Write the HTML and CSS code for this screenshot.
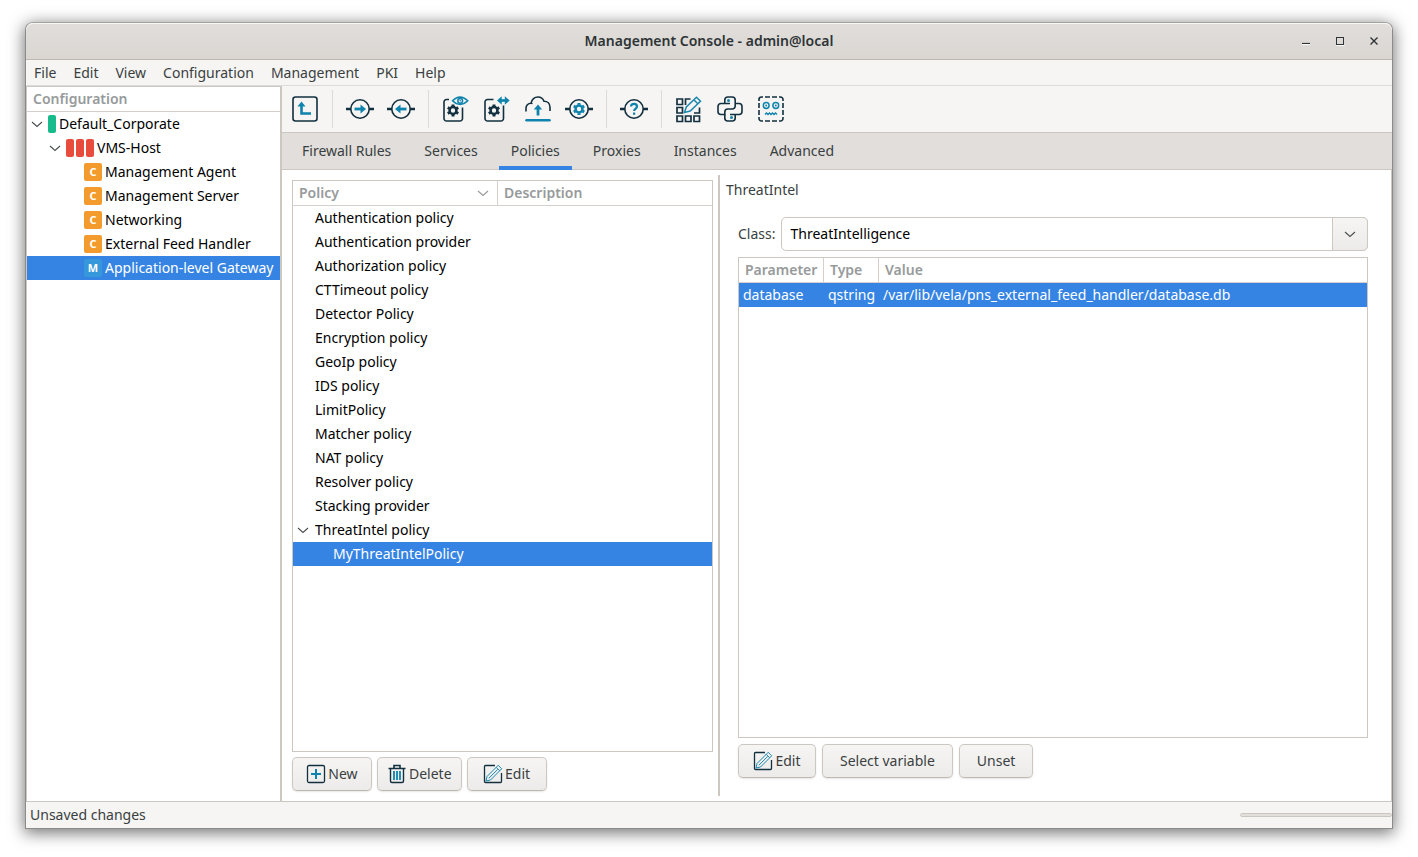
FILE: index.html
```html
<!DOCTYPE html>
<html lang="en">
<head>
  <meta charset="UTF-8">
  <meta name="viewport" content="width=device-width, initial-scale=1.0">
  <title>Management Console - admin@local</title>
  <link rel="stylesheet" href="styles.css">
</head>
<body>
  <!-- Shared icons -->
  <svg class="symbols" aria-hidden="true">
    <symbol id="chevron" viewBox="0 0 12 12"><path d="M1 4l5 4.500 5-4.500" fill="none" stroke="currentColor" stroke-width="1.100"/></symbol>
    <symbol id="pencil" viewBox="0 0 20 20">
      <path d="M12 1.500H2.500a1 1 0 0 0-1 1v15a1 1 0 0 0 1 1h15a1 1 0 0 0 1-1V9" fill="none" stroke="#12303f" stroke-width="1.300"/>
      <path d="M3 17l1-4.500L15.200 1.300l3.500 3.500L7.500 16 3 17zM13.200 3.300l3.500 3.500M5.800 14.300l9-9" fill="none" stroke="#1a86ae"/>
    </symbol>
    <symbol id="gear" viewBox="0 0 14 14">
      <path d="M7 2.500v-2M7 11.500v2M3.100 4.750l-1.700-1M10.900 9.250l1.700 1M3.100 9.250l-1.700 1M10.900 4.750l1.700-1" fill="none" stroke="currentColor" stroke-width="3.200"/>
      <circle cx="7" cy="7" r="3.700" fill="none" stroke="currentColor" stroke-width="2.700"/>
    </symbol>
  </svg>

  <div class="window">
    <header class="titlebar">
      <h1 class="title">Management Console - admin@local</h1>
      <div class="window-controls">
        <button type="button" aria-label="Minimize"><svg viewBox="0 0 10 10"><path d="M1 7.500h8" stroke="#2e3436" stroke-width="1.200"/><path d="M1 8.600h8" stroke="#fff"/></svg></button>
        <button type="button" aria-label="Maximize"><svg viewBox="0 0 10 10"><path d="M1.500 9.600h8" stroke="#fff"/><rect x="1.500" y="1.500" width="7" height="7" fill="none" stroke="#2e3436"/></svg></button>
        <button type="button" aria-label="Close"><svg viewBox="0 0 10 10"><path d="M1.500 1.500l7 7M8.500 1.500l-7 7" stroke="#2e3436" stroke-width="1.400"/></svg></button>
      </div>
    </header>

    <nav class="menubar">
      <button type="button">File</button>
      <button type="button">Edit</button>
      <button type="button">View</button>
      <button type="button">Configuration</button>
      <button type="button">Management</button>
      <button type="button">PKI</button>
      <button type="button">Help</button>
    </nav>

    <div class="workspace">
      <!-- Configuration tree -->
      <aside class="sidebar">
        <h2 class="sidebar-title">Configuration</h2>
        <ul class="tree">
          <li class="tree-row"><svg class="chevron"><use href="#chevron"/></svg><span class="site"></span>Default_Corporate</li>
          <li class="tree-row level-1"><svg class="chevron"><use href="#chevron"/></svg><span class="host"></span><span class="host"></span><span class="host last"></span>VMS-Host</li>
          <li class="tree-row level-2"><span class="badge">C</span>Management Agent</li>
          <li class="tree-row level-2"><span class="badge">C</span>Management Server</li>
          <li class="tree-row level-2"><span class="badge">C</span>Networking</li>
          <li class="tree-row level-2"><span class="badge">C</span>External Feed Handler</li>
          <li class="tree-row level-2 selected"><span class="badge badge-m">M</span>Application-level Gateway</li>
        </ul>
      </aside>

      <main class="main">
        <div class="toolbar">
          <button type="button" aria-label="Up">
            <svg viewBox="0 0 28 28" fill="none"><rect x="2" y="2" width="24" height="24" rx="2.500" stroke="#12303f" stroke-width="1.600"/><path d="M10.500 10v8.500H20" stroke="#0e83ad" stroke-width="2.600"/><path d="M6.500 11.500l4-5 4 5z" fill="#0e83ad"/></svg>
          </button>
          <span class="separator"></span>
          <button type="button" aria-label="Connect">
            <svg viewBox="0 0 28 28" fill="none"><path d="M0 14h5M23 14h5" stroke="#12303f" stroke-width="2.600"/><circle cx="14" cy="14" r="9.200" stroke="#12303f" stroke-width="1.600"/><path d="M8.500 14H16" stroke="#0e83ad" stroke-width="2.800"/><path d="M14.500 9.500l5.500 4.500-5.500 4.500z" fill="#0e83ad"/></svg>
          </button>
          <button type="button" aria-label="Disconnect">
            <svg viewBox="0 0 28 28" fill="none"><path d="M0 14h5M23 14h5" stroke="#12303f" stroke-width="2.600"/><circle cx="14" cy="14" r="9.200" stroke="#12303f" stroke-width="1.600"/><path d="M12 14h7.500" stroke="#0e83ad" stroke-width="2.800"/><path d="M13.500 9.500L8 14l5.500 4.500z" fill="#0e83ad"/></svg>
          </button>
          <span class="separator"></span>
          <button type="button" aria-label="View configuration">
            <svg viewBox="0 0 28 28" fill="none"><path d="M7 4.500H4.500a2.500 2.500 0 0 0-2.500 2.500V23.500A2.500 2.500 0 0 0 4.500 26H18a2.500 2.500 0 0 0 2.500-2.500V12.500" stroke="#12303f" stroke-width="1.600"/><path d="M10.500 5.800Q18 -1.500 25.800 5.800Q18 13 10.500 5.800z" stroke="#0e83ad" stroke-width="1.500"/><circle cx="18.200" cy="5.800" r="2.400" stroke="#0e83ad" stroke-width="1.500"/><circle cx="18.200" cy="5.800" r=".800" fill="#0e83ad"/><use href="#gear" x="4.500" y="9" width="13" height="13" color="#12303f"/></svg>
          </button>
          <button type="button" aria-label="Compare configuration">
            <svg viewBox="0 0 28 28" fill="none"><path d="M10.500 4.500h-6a2.500 2.500 0 0 0-2.500 2.500V23.500A2.500 2.500 0 0 0 4.500 26H18a2.500 2.500 0 0 0 2.500-2.500V10.500" stroke="#12303f" stroke-width="1.600"/><path d="M16 5.500h8" stroke="#0e83ad" stroke-width="2.600"/><path d="M18.700 1.200v8.600L14 5.500zM21.800 1.200v8.600l4.900-4.300z" fill="#0e83ad"/><use href="#gear" x="4.500" y="9" width="13" height="13" color="#12303f"/></svg>
          </button>
          <button type="button" aria-label="Upload configuration">
            <svg viewBox="0 0 28 28" fill="none"><path d="M2 16.500v-3a5 5 0 0 1 5-5.300c.500 0 1 .100 1.500.400M7 8.200C8 4 10.500 2 14 2c3 0 5 1.500 6 4.200 3.500 0 6 2.500 6 6V16" stroke="#12303f" stroke-width="1.600"/><path d="M14 20.500V13" stroke="#0e83ad" stroke-width="2.800"/><path d="M9.800 14.500L14 9.500l4.200 5z" fill="#0e83ad"/><path d="M2.500 25.200h23" stroke="#0e83ad" stroke-width="2.500" stroke-linecap="round"/></svg>
          </button>
          <button type="button" aria-label="Control service">
            <svg viewBox="0 0 28 28" fill="none"><path d="M0 14h5M23 14h5" stroke="#12303f" stroke-width="2.600"/><circle cx="14" cy="14" r="9.200" stroke="#12303f" stroke-width="1.600"/><use href="#gear" x="7.500" y="7.500" width="13" height="13" color="#0e83ad"/></svg>
          </button>
          <span class="separator"></span>
          <button type="button" aria-label="Check">
            <svg viewBox="0 0 28 28" fill="none"><path d="M0 14h5M23 14h5" stroke="#12303f" stroke-width="2.600"/><circle cx="14" cy="14" r="9.200" stroke="#12303f" stroke-width="1.600"/><path d="M11 11.500c0-3.600 6-3.600 6 0 0 2-2.800 2.200-2.800 4.500M14.100 17.500v2.300" stroke="#0e83ad" stroke-width="2.200"/></svg>
          </button>
          <span class="separator"></span>
          <button type="button" aria-label="Edit components">
            <svg viewBox="0 0 28 28" fill="none"><path d="M2 4h5.500v5.500H2zM2 12.500h5.500v5.500H2zM2 21h5.500v5.500H2zM10.500 21h5.500v5.500h-5.500zM19 21h5.500v5.500H19zM15.500 4h-5v6M19 18h5.500v-5.500" stroke="#12303f" stroke-width="1.700"/><path d="M9.500 17.500l1.800-5.500L21.500 2.200l4 4L15.200 16l-5.700 1.500zM18.800 4.800l4 4" stroke="#1a86ae" stroke-width="1.500"/></svg>
          </button>
          <button type="button" aria-label="Python">
            <svg viewBox="0 0 28 28" fill="none" stroke="#12303f" stroke-width="1.600"><path d="M14 8.500H8.800V4.800A3 3 0 0 1 11.800 2h4.400A3 3 0 0 1 19.200 5v6a3 3 0 0 1-3 3h-4.400a3 3 0 0 0-3 3v2.500H5A3 3 0 0 1 2 16.500v-5a3 3 0 0 1 3-3h3.800"/><path d="M14 19.500h5.200V23a3 3 0 0 1-3 3h-4.400a3 3 0 0 1-3-3v-3.500M19.200 8.500H23a3 3 0 0 1 3 3v5a3 3 0 0 1-3 3h-3.800"/><circle cx="12.500" cy="5.500" r="1.500" fill="#0e83ad" stroke="none"/><circle cx="15.500" cy="22.500" r="1.500" fill="#0e83ad" stroke="none"/></svg>
          </button>
          <button type="button" aria-label="Placeholder component">
            <svg viewBox="0 0 28 28" fill="none"><path d="M2 6V4.500A2.500 2.500 0 0 1 4.500 2H6M22 2h1.500A2.500 2.500 0 0 1 26 4.500V6M26 22v1.500a2.500 2.500 0 0 1-2.500 2.500H22M6 26H4.500A2.500 2.500 0 0 1 2 23.500V22M8 2h5M15 2h5M8 26h5M15 26h5M2 8v5M2 15v5M26 8v5M26 15v5" stroke="#12303f" stroke-width="1.600"/><circle cx="9.200" cy="10.500" r="2.900" stroke="#0e83ad" stroke-width="1.500"/><circle cx="18.800" cy="10.500" r="2.900" stroke="#0e83ad" stroke-width="1.500"/><circle cx="9.200" cy="10.500" r="1" fill="#0e83ad"/><circle cx="18.800" cy="10.500" r="1" fill="#0e83ad"/><path d="M8 19.500l1.500-1.500 1.500 1.500 1.500-1.500 1.500 1.500 1.500-1.500 1.500 1.500 1.500-1.500 1.500 1.500" stroke="#0e83ad" stroke-width="1.400"/></svg>
          </button>
        </div>

        <div class="tabs" role="tablist">
          <button type="button" role="tab">Firewall Rules</button>
          <button type="button" role="tab">Services</button>
          <button type="button" role="tab" class="active" aria-selected="true">Policies</button>
          <button type="button" role="tab">Proxies</button>
          <button type="button" role="tab">Instances</button>
          <button type="button" role="tab">Advanced</button>
        </div>

        <div class="panes">
          <section class="policies">
            <div class="list-box">
              <table>
                <thead>
                  <tr><th class="col-policy"><span class="sort-head">Policy<svg class="chevron"><use href="#chevron"/></svg></span></th><th>Description</th></tr>
                </thead>
                <tbody>
                  <tr><td class="indent">Authentication policy</td><td></td></tr>
                  <tr><td class="indent">Authentication provider</td><td></td></tr>
                  <tr><td class="indent">Authorization policy</td><td></td></tr>
                  <tr><td class="indent">CTTimeout policy</td><td></td></tr>
                  <tr><td class="indent">Detector Policy</td><td></td></tr>
                  <tr><td class="indent">Encryption policy</td><td></td></tr>
                  <tr><td class="indent">GeoIp policy</td><td></td></tr>
                  <tr><td class="indent">IDS policy</td><td></td></tr>
                  <tr><td class="indent">LimitPolicy</td><td></td></tr>
                  <tr><td class="indent">Matcher policy</td><td></td></tr>
                  <tr><td class="indent">NAT policy</td><td></td></tr>
                  <tr><td class="indent">Resolver policy</td><td></td></tr>
                  <tr><td class="indent">Stacking provider</td><td></td></tr>
                  <tr><td><span class="expander"><svg class="chevron"><use href="#chevron"/></svg>ThreatIntel policy</span></td><td></td></tr>
                  <tr class="selected"><td class="indent-2">MyThreatIntelPolicy</td><td></td></tr>
                </tbody>
              </table>
            </div>
            <div class="actions actions-tight">
              <button type="button" class="btn">
                <svg viewBox="0 0 20 20" fill="none"><rect x="1.500" y="1.500" width="17" height="17" rx="1.500" stroke="#12303f" stroke-width="1.300"/><path d="M10 5v10M5 10h10" stroke="#0e83ad" stroke-width="2"/></svg>New
              </button>
              <button type="button" class="btn">
                <svg viewBox="0 0 20 20" fill="none"><path d="M1.500 4.500h17M7 4V1.500h6V4" stroke="#12303f" stroke-width="1.600"/><path d="M3.500 5v12a1.500 1.500 0 0 0 1.500 1.500h10a1.500 1.500 0 0 0 1.500-1.500V5" stroke="#12303f" stroke-width="1.400"/><path d="M7 7v9M10 7v9M13 7v9" stroke="#0e83ad" stroke-width="1.800"/></svg>Delete
              </button>
              <button type="button" class="btn"><svg><use href="#pencil"/></svg>Edit</button>
            </div>
          </section>

          <div class="splitter"></div>

          <section class="details">
            <h2 class="details-title">ThreatIntel</h2>
            <div class="details-body">
              <div class="field">
                <label for="class-select">Class:</label>
                <div class="combo">
                  <select id="class-select"><option>ThreatIntelligence</option></select>
                  <span class="combo-arrow"><svg class="chevron"><use href="#chevron"/></svg></span>
                </div>
              </div>
              <div class="list-box">
                <table>
                  <thead>
                    <tr><th class="col-parameter">Parameter</th><th class="col-type">Type</th><th>Value</th></tr>
                  </thead>
                  <tbody>
                    <tr class="selected"><td>database</td><td>qstring</td><td>/var/lib/vela/pns_external_feed_handler/database.db</td></tr>
                  </tbody>
                </table>
              </div>
              <div class="actions">
                <button type="button" class="btn"><svg><use href="#pencil"/></svg>Edit</button>
                <button type="button" class="btn btn-text">Select variable</button>
                <button type="button" class="btn btn-text">Unset</button>
              </div>
            </div>
          </section>
        </div>
      </main>
    </div>

    <footer class="statusbar">
      <span>Unsaved changes</span>
      <progress value="0" max="100" aria-label="Progress"></progress>
    </footer>
  </div>
</body>
</html>
```
FILE: styles.css
```css
* {
  box-sizing: border-box;
}
body {
  margin: 0;
  padding: 22px 25px 28px;
  min-height: 100vh;
  display: flex;
  background: #fff;
  color: #3a3f41;
  font-family: "Noto Sans", sans-serif;
  font-size: 14px;
  line-height: 24px;
}
button,
select {
  font: inherit;
  color: inherit;
}
button {
  margin: 0;
  padding: 0;
  border: 0;
  background: none;
}
h1,
h2 {
  margin: 0;
  font-size: 14px;
}
.symbols {
  position: absolute;
  width: 0;
  height: 0;
}
.chevron {
  width: 12px;
  height: 12px;
  flex: none;
  color: #4a4f51;
}
.window {
  flex: 1;
  min-width: 0;
  display: flex;
  flex-direction: column;
  border: 1px solid #8b8b89;
  border-top-color: #a5a3a0;
  border-radius: 8px 8px 0 0;
  background: #f6f5f3;
  box-shadow: 0 3px 16px 1px rgba(0, 0, 0, 0.55);
}

/* Title bar and menu */
.titlebar {
  display: grid;
  grid-template-columns: 1fr auto 1fr;
  align-items: center;
  height: 37px;
  border-bottom: 1px solid #bfb8b1;
  border-radius: 7px 7px 0 0;
  background: linear-gradient(#e1dedb, #dad6d2);
  box-shadow: inset 0 1px #f7f6f5;
}
.title {
  grid-column: 2;
  color: #2e3436;
  font-weight: 600;
}
.window-controls {
  display: flex;
  justify-content: flex-end;
  padding-right: 1px;
}
.window-controls button {
  width: 34px;
  height: 34px;
  display: flex;
  align-items: center;
  justify-content: center;
}
.window-controls svg {
  width: 10px;
  height: 10px;
}
.menubar {
  display: flex;
  gap: 1px;
  height: 26px;
  border-bottom: 1px solid #dddad7;
}
.menubar button {
  padding: 0 8px;
}
.workspace {
  flex: 1;
  min-height: 0;
  display: flex;
}

/* Configuration tree */
.sidebar {
  width: 256px;
  flex: none;
  border: 1px solid #cdc7c2;
  border-width: 1px 2px 0 1px;
  background: #fff;
  overflow: hidden;
}
.sidebar-title {
  height: 25px;
  padding-left: 6px;
  border-bottom: 1px solid #d5d0cc;
  color: #979a9b;
  font-weight: 600;
}
.tree {
  margin: 0;
  padding: 0;
  list-style: none;
  color: #000;
}
.tree-row {
  display: flex;
  align-items: center;
  height: 24px;
  padding-left: 4px;
  white-space: nowrap;
}
.level-1 {
  padding-left: 22px;
}
.level-2 {
  padding-left: 57px;
}
.site,
.host {
  width: 8px;
  height: 18px;
  border-radius: 2px;
}
.site {
  margin: 0 3px 0 5px;
  background: #18bc8c;
}
.host {
  margin-right: 2px;
  background: #e74c3c;
}
.chevron + .host {
  margin-left: 5px;
}
.host.last {
  margin-right: 3px;
}
.badge {
  width: 18px;
  height: 18px;
  margin-right: 3px;
  flex: none;
  border-radius: 2px;
  background: #f39c2d;
  color: #fff;
  font-size: 11px;
  font-weight: 700;
  line-height: 18px;
  text-align: center;
}
.badge-m {
  background: #3498db;
}
.selected {
  background: #3584e4;
  color: #fff;
}

/* Toolbar and tabs */
.main {
  flex: 1;
  min-width: 0;
  display: flex;
  flex-direction: column;
}
.toolbar {
  display: flex;
  align-items: center;
  gap: 13px;
  height: 47px;
  padding-left: 9px;
  border-bottom: 1px solid #cdc7c2;
}
.toolbar button {
  width: 28px;
  height: 28px;
}
.toolbar svg {
  display: block;
  width: 28px;
  height: 28px;
}
.separator {
  width: 1px;
  height: 38px;
  background: #dddad7;
}
.tabs {
  display: flex;
  gap: 9px;
  height: 37px;
  padding-left: 8px;
  border-bottom: 1px solid #cdc7c2;
  background: #e1dedb;
}
.tabs button {
  height: 37px;
  padding: 2px 12px 0;
  border-bottom: 4px solid transparent;
}
.tabs .active {
  border-bottom-color: #3584e4;
}

/* Panes */
.panes {
  flex: 1;
  display: flex;
  background: #fff;
  border-right: 1px solid #cdc7c2;
}
.policies {
  width: 436px;
  flex: none;
  display: flex;
  flex-direction: column;
  padding: 10px 5px 10px 10px;
}
.splitter {
  width: 2px;
  margin: 5px 0;
  background: #cdc7c2;
}
.details {
  flex: 1;
  min-width: 0;
  display: flex;
  flex-direction: column;
  padding: 8px 23px 23px 6px;
}
.details-title {
  font-weight: 400;
}
.details-body {
  flex: 1;
  display: flex;
  flex-direction: column;
  gap: 6px;
  padding: 15px 0 0 12px;
}
.list-box {
  flex: 1;
  border: 1px solid #cdc7c2;
}
table {
  width: 100%;
  border-collapse: separate;
  border-spacing: 0;
  table-layout: fixed;
  color: #000;
}
th {
  height: 25px;
  padding: 0 6px;
  border-bottom: 1px solid #d5d0cc;
  color: #979a9b;
  font-weight: 600;
  text-align: left;
}
th + th {
  border-left: 1px solid #d5d0cc;
}
td {
  height: 24px;
  padding: 0 4px;
  white-space: nowrap;
}
td + td {
  padding-left: 5px;
}
.selected td {
  color: #fff;
}
.col-policy {
  width: 204px;
}
.col-parameter {
  width: 84px;
}
.col-type {
  width: 55px;
}
.sort-head {
  display: flex;
  align-items: center;
  justify-content: space-between;
  padding-right: 2px;
}
.sort-head .chevron {
  color: #979a9b;
}
.indent {
  padding-left: 22px;
}
.indent-2 {
  padding-left: 40px;
}
.expander {
  display: flex;
  align-items: center;
  gap: 6px;
}
.field {
  display: flex;
  align-items: center;
  gap: 6px;
}
.combo {
  position: relative;
  flex: 1;
}
.combo select {
  display: block;
  width: 100%;
  height: 34px;
  padding: 0 44px 0 8px;
  border: 1px solid #cdc7c2;
  border-radius: 5px;
  appearance: none;
  background: #fff;
  color: #000;
}
/* Drop-down arrow over the right end of the select */
.combo-arrow {
  position: absolute;
  top: 0;
  right: 0;
  display: flex;
  align-items: center;
  justify-content: center;
  width: 36px;
  height: 34px;
  border: 1px solid #cdc7c2;
  border-radius: 0 5px 5px 0;
  background: linear-gradient(#f6f5f4, #edebe9);
  pointer-events: none;
}
.actions {
  display: flex;
  gap: 6px;
}
.actions-tight {
  gap: 5px;
  padding-top: 5px;
}
.btn {
  display: flex;
  align-items: center;
  justify-content: center;
  gap: 2px;
  height: 34px;
  min-width: 78px;
  padding: 0 9px;
  border: 1px solid #cdc7c2;
  border-bottom-color: #bfb8b1;
  border-radius: 5px;
  background: linear-gradient(#f6f5f4, #edebe9);
  box-shadow: 0 1px 2px rgba(0, 0, 0, 0.1);
}
.actions-tight .btn {
  min-width: 80px;
}
.btn svg {
  width: 20px;
  height: 20px;
}
.btn-text {
  min-width: 72px;
  padding: 0 17px;
}

/* Status bar */
.statusbar {
  display: flex;
  align-items: center;
  justify-content: space-between;
  height: 27px;
  padding-left: 4px;
  border-top: 1px solid #cdc7c2;
}
progress {
  width: 152px;
  height: 4px;
  border: 1px solid #cdc7c2;
  border-radius: 2px;
  appearance: none;
  background: #e1dedb;
}
progress::-webkit-progress-bar {
  background: #e1dedb;
}
```
